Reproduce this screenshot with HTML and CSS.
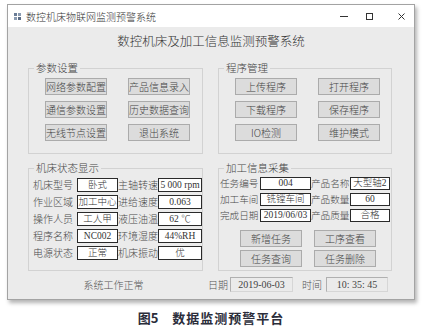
FILE: index.html
```html
<!DOCTYPE html>
<html lang="zh-CN">
<head>
    <meta charset="UTF-8">
    <meta name="viewport" content="width=device-width, initial-scale=1.0">
    <title>数据监测预警平台</title>
    <link rel="stylesheet" href="styles.css">
</head>
<body>
    <div class="window">
        <div class="titlebar">
            <svg class="app-icon" width="7" height="7" viewBox="0 0 7 7">
                <rect x="0" y="0" width="3" height="3" fill="#6a7c96"/>
                <rect x="4" y="0" width="3" height="3" fill="#8a9bb2"/>
                <rect x="0" y="4" width="3" height="3" fill="#8a9bb2"/>
                <rect x="4" y="4" width="3" height="3" fill="#5a6b84"/>
            </svg>
            <span class="app-name">数控机床物联网监测预警系统</span>
            <div class="controls">
                <svg class="ctrl-min" width="8" height="8" viewBox="0 0 8 8"><line x1="0" y1="4.5" x2="8" y2="4.5" stroke="#333" stroke-width="1"/></svg>
                <svg class="ctrl-max" width="7" height="7" viewBox="0 0 7 7"><rect x="0.5" y="0.5" width="6" height="6" fill="none" stroke="#333" stroke-width="1"/></svg>
                <svg class="ctrl-close" width="7" height="7" viewBox="0 0 7 7"><path d="M0.5 0.5 L6.5 6.5 M6.5 0.5 L0.5 6.5" stroke="#333" stroke-width="1"/></svg>
            </div>
        </div>
        <div class="content">
            <h1 class="main-title">数控机床及加工信息监测预警系统</h1>
            <div class="groups">
                <fieldset class="group">
                    <legend>参数设置</legend>
                    <div class="btn-grid">
                        <button class="btn">网络参数配置</button>
                        <button class="btn">产品信息录入</button>
                        <button class="btn">通信参数设置</button>
                        <button class="btn">历史数据查询</button>
                        <button class="btn">无线节点设置</button>
                        <button class="btn">退出系统</button>
                    </div>
                </fieldset>
                <fieldset class="group">
                    <legend>程序管理</legend>
                    <div class="btn-grid">
                        <button class="btn">上传程序</button>
                        <button class="btn">打开程序</button>
                        <button class="btn">下载程序</button>
                        <button class="btn">保存程序</button>
                        <button class="btn">IO检测</button>
                        <button class="btn">维护模式</button>
                    </div>
                </fieldset>
                <fieldset class="group">
                    <legend>机床状态显示</legend>
                    <div class="state-grid">
                        <span class="lbl">机床型号</span><span class="val">卧式</span>
                        <span class="lbl">主轴转速</span><span class="val">5 000 rpm</span>
                        <span class="lbl">作业区域</span><span class="val">加工中心</span>
                        <span class="lbl">进给速度</span><span class="val">0.063</span>
                        <span class="lbl">操作人员</span><span class="val">工人甲</span>
                        <span class="lbl">液压油温</span><span class="val">62 ℃</span>
                        <span class="lbl">程序名称</span><span class="val">NC002</span>
                        <span class="lbl">环境湿度</span><span class="val">44%RH</span>
                        <span class="lbl">电源状态</span><span class="val">正常</span>
                        <span class="lbl">机床振动</span><span class="val">优</span>
                    </div>
                </fieldset>
                <fieldset class="group">
                    <legend>加工信息采集</legend>
                    <div class="task-grid">
                        <span class="lbl">任务编号</span><span class="val">004</span>
                        <span class="lbl">产品名称</span><span class="val">大型轴2</span>
                        <span class="lbl">加工车间</span><span class="val">铣镗车间</span>
                        <span class="lbl">产品数量</span><span class="val">60</span>
                        <span class="lbl">完成日期</span><span class="val">2019/06/03</span>
                        <span class="lbl">产品质量</span><span class="val">合格</span>
                    </div>
                    <div class="task-btns">
                        <button class="btn">新增任务</button>
                        <button class="btn">工序查看</button>
                        <button class="btn">任务查询</button>
                        <button class="btn">任务删除</button>
                    </div>
                </fieldset>
            </div>
            <div class="statusbar">
                <span class="status-msg">系统工作正常</span>
                <span class="stat-label date-label">日期</span>
                <span class="stat-box date-box">2019-06-03</span>
                <span class="stat-label time-label">时间</span>
                <span class="stat-box time-box">10: 35: 45</span>
            </div>
        </div>
    </div>
    <p class="caption"><span class="fig-no">图5</span>数据监测预警平台</p>
</body>
</html>
```
FILE: styles.css
```css
*{
    box-sizing: border-box;
}
body{
    margin: 0;
    background-color: #fff;
    font-family: "Noto Sans CJK SC", sans-serif;
    font-weight: 300;
    color: #444;
}
.window{
    width: 408px;
    margin: 4px 0 0 7px;
    border: 1px solid #a3a3a3;
    background-color: #ebebeb;
    box-shadow: 2px 3px 4px rgba(0, 0, 0, 0.3);
}
.titlebar{
    display: flex;
    align-items: center;
    height: 22px;
    padding-left: 6px;
    background-color: #fff;
    font-size: 10px;
    color: #333;
}
.app-icon{
    margin-right: 5px;
}
.controls{
    display: flex;
    align-items: center;
    margin-left: auto;
    padding-right: 9px;
}
.ctrl-max{
    margin-left: 18px;
}
.ctrl-close{
    margin-left: 25px;
}
.content{
    padding: 4px 0 7px 20px;
}
.main-title{
    margin: 0;
    padding-right: 20px;
    font-size: 12.5px;
    font-weight: 300;
    line-height: 20px;
    text-align: center;
    color: #333;
}
.groups{
    display: grid;
    grid-template-columns: 175px 174px;
    column-gap: 15px;
    row-gap: 7px;
    margin-top: 10px;
}
.group{
    margin: 0;
    padding: 0;
    min-width: 0;
    border: 1px solid #d2d2d2;
}
.group legend{
    margin-left: 5px;
    padding: 0 2px;
    font-size: 10.5px;
    line-height: 14px;
    color: #444;
}
.btn{
    height: 17px;
    padding: 0;
    border: 1px solid #ababab;
    background-color: #dcdcdc;
    font-family: inherit;
    font-size: 10px;
    font-weight: 300;
    line-height: 15px;
    color: #444;
    white-space: nowrap;
}
.btn-grid{
    display: grid;
    grid-template-columns: 62px 62px;
    column-gap: 21px;
    row-gap: 6px;
    padding: 3px 0 12px 16px;
}
.lbl{
    font-size: 10px;
    line-height: 14px;
    white-space: nowrap;
    color: #4a4a4a;
}
.val{
    background-color: #fff;
    border: 1px solid #2a2a2a;
    font-family: "Liberation Serif", "Noto Sans CJK SC", serif;
    font-size: 9.5px;
    text-align: center;
    white-space: nowrap;
    color: #333;
}
.state-grid{
    display: grid;
    grid-template-columns: 44px 41px 40px 44px;
    grid-auto-rows: 14px;
    row-gap: 3px;
    padding: 3px 0 10px 4px;
}
.state-grid .val{
    line-height: 12px;
}
.task-grid{
    display: grid;
    grid-template-columns: 40px 51px 39px 40px;
    grid-auto-rows: 13px;
    row-gap: 3px;
    padding: 2px 0 0 1px;
}
.task-grid .lbl{
    font-size: 9.6px;
    line-height: 13px;
}
.task-grid .val{
    line-height: 11px;
}
.task-btns{
    display: grid;
    grid-template-columns: 62px 62px;
    column-gap: 12px;
    row-gap: 3px;
    margin-top: 8px;
    padding: 0 0 3px 21px;
}
.statusbar{
    display: flex;
    align-items: center;
    height: 15px;
    margin-top: 6px;
    font-size: 10px;
    color: #555;
}
.status-msg{
    width: 175px;
    padding-right: 4px;
    text-align: center;
}
.stat-label{
    width: 22px;
}
.date-label{
    margin-left: 5px;
}
.time-label{
    width: 24px;
    margin-left: 9px;
}
.stat-box{
    height: 15px;
    border: 1px solid #d6d6d6;
    border-top-color: #b0b0b0;
    border-left-color: #b0b0b0;
    font-family: "Liberation Serif", serif;
    font-size: 10px;
    line-height: 13px;
    text-align: center;
    color: #444;
}
.date-box{
    width: 63px;
}
.time-box{
    width: 62px;
}
.caption{
    width: 408px;
    margin: 10px 0 0 7px;
    font-size: 13px;
    font-weight: bold;
    line-height: 16px;
    text-align: center;
    letter-spacing: 1px;
    color: #2b2d3a;
}
.fig-no{
    margin-right: 14px;
    letter-spacing: 0;
}
```
